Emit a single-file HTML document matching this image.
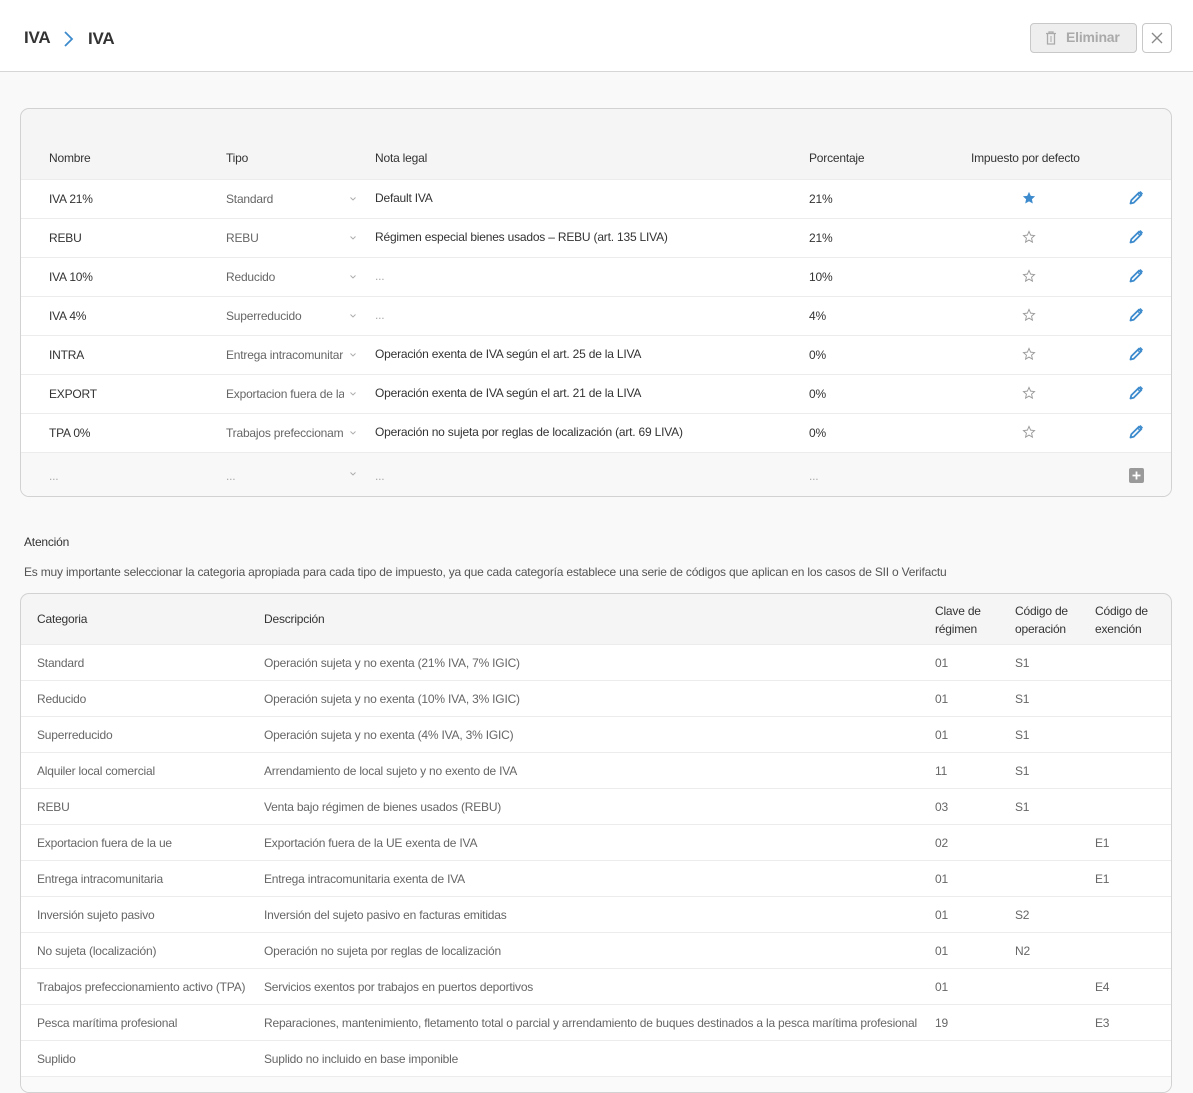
<!DOCTYPE html>
<html><head><meta charset="utf-8">
<style>
*{margin:0;padding:0;box-sizing:border-box}
body{width:1193px;height:1081px;overflow:hidden;background:#f9f9f9;font-family:"Liberation Sans",sans-serif;font-size:12px;color:#333;position:relative;letter-spacing:-0.2px}
.hdr{position:absolute;left:0;top:0;width:1193px;height:72px;background:#fff;border-bottom:1px solid #d6d6d6}
.t{position:absolute;white-space:nowrap;line-height:14px}
.card{position:absolute;left:20px;width:1152px;border:1px solid #d2d2d2;border-radius:9px;overflow:hidden;background:#fff}
.row{position:absolute;left:0;width:1150px;border-top:1px solid #ececec}
.g{color:#666}
.lg{color:#aaa}
.chev svg{display:block}
</style></head><body>
<div class="hdr">
  <div class="t" style="left:24px;top:31px;font-size:17px;font-weight:bold;color:#333">IVA</div>
  <svg style="position:absolute;left:62px;top:30px" width="12" height="18" viewBox="0 0 12 18"><path d="M3 2 L10 9 L3 16" fill="none" stroke="#3d8bcd" stroke-width="1.8"/></svg>
  <div class="t" style="left:88px;top:32px;font-size:17px;font-weight:bold;color:#333">IVA</div>
  <div style="position:absolute;left:1030px;top:23px;width:107px;height:30px;background:#eeeeee;border:1px solid #c8c8c8;border-radius:4px"></div>
  <svg style="position:absolute;left:1045px;top:31px" width="12" height="14" viewBox="0 0 12 14"><path d="M1 2.5H11M4 2.5V1H8V2.5M2.5 2.5V13H9.5V2.5" fill="none" stroke="#aaa" stroke-width="1.3"/><path d="M6 5V11" stroke="#aaa" stroke-width="1"/></svg>
  <div class="t" style="left:1066px;top:30px;font-size:14px;font-weight:bold;color:#aaa">Eliminar</div>
  <div style="position:absolute;left:1142px;top:23px;width:30px;height:30px;border:1px solid #c8c8c8;border-radius:4px;background:#fff"></div>
  <svg style="position:absolute;left:1151px;top:32px" width="12" height="12" viewBox="0 0 12 12"><path d="M1 1L11 11M11 1L1 11" stroke="#888" stroke-width="1.3"/></svg>
</div>

<div class="card" style="top:108px;height:389px;background:#f5f5f5">
  <div class="t" style="left:28px;top:42px">Nombre</div>
  <div class="t" style="left:205px;top:42px">Tipo</div>
  <div class="t" style="left:354px;top:42px">Nota legal</div>
  <div class="t" style="left:788px;top:42px">Porcentaje</div>
  <div class="t" style="left:950px;top:42px">Impuesto por defecto</div>
  <div id="r1"></div>
</div>

<div class="t" style="left:24px;top:535px;color:#333">Atención</div>
<div class="t g" style="left:24px;top:565px;color:#555">Es muy importante seleccionar la categoria apropiada para cada tipo de impuesto, ya que cada categoría establece una serie de códigos que aplican en los casos de SII o Verifactu</div>

<div class="card" style="top:593px;height:500px;background:#f5f5f5">
  <div class="t" style="left:16px;top:18px">Categoria</div>
  <div class="t" style="left:243px;top:18px">Descripción</div>
  <div class="t" style="left:914px;top:8px;line-height:18px">Clave de<br>régimen</div>
  <div class="t" style="left:994px;top:8px;line-height:18px">Código de<br>operación</div>
  <div class="t" style="left:1074px;top:8px;line-height:18px">Código de<br>exención</div>
  <div id="r2"></div>
</div>

<script>
var pencil='<svg width="16" height="16" viewBox="0 0 16 16"><path d="M2.5 13.5L3.3 10.3L11 2.6L13.4 5L5.7 12.7Z" fill="none" stroke="#3d8bcd" stroke-width="1.8" stroke-linejoin="round"/><path d="M11.5 2L12.5 1L15 3.5L14 4.5Z" fill="#3d8bcd"/><path d="M9.6 4L12 6.4" stroke="#3d8bcd" stroke-width="1.3"/></svg>';
function star(f){return f?'<svg width="14" height="14" viewBox="0 0 24 24"><path d="M12 1.5L15.1 8.3L22.5 9.1L17 14.1L18.5 21.5L12 17.8L5.5 21.5L7 14.1L1.5 9.1L8.9 8.3Z" fill="#3d8bcd"/></svg>':'<svg width="14" height="14" viewBox="0 0 24 24"><path d="M12 2.5L14.8 8.8L21.5 9.5L16.4 14L17.9 20.8L12 17.3L6.1 20.8L7.6 14L2.5 9.5L9.2 8.8Z" fill="none" stroke="#999" stroke-width="1.6"/></svg>';}
var chev='<svg width="6" height="4" viewBox="0 0 6 4"><path d="M0.5 0.5L3 3L5.5 0.5" fill="none" stroke="#aaa" stroke-width="0.9"/></svg>';
var d1=[["IVA 21%","Standard","Default IVA","21%",1],["REBU","REBU","Régimen especial bienes usados – REBU (art. 135 LIVA)","21%",0],["IVA 10%","Reducido","...","10%",0],["IVA 4%","Superreducido","...","4%",0],["INTRA","Entrega intracomunitar","Operación exenta de IVA según el art. 25 de la LIVA","0%",0],["EXPORT","Exportacion fuera de la","Operación exenta de IVA según el art. 21 de la LIVA","0%",0],["TPA 0%","Trabajos prefeccionami","Operación no sujeta por reglas de localización (art. 69 LIVA)","0%",0]];
var h='';
d1.forEach(function(r,i){var top=70+i*39;
h+='<div class="row" style="top:'+top+'px;height:39px;background:#fff">'+
'<div class="t" style="left:28px;top:12px">'+r[0]+'</div>'+
'<div class="t g" style="left:205px;top:12px;width:118px;overflow:hidden">'+r[1]+'</div>'+
'<div class="chev" style="position:absolute;left:329px;top:17px">'+chev+'</div>'+
'<div class="t '+(r[2]=="..."?"lg":"")+'" style="left:354px;top:11px">'+r[2]+'</div>'+
'<div class="t" style="left:788px;top:12px">'+r[3]+'</div>'+
'<div style="position:absolute;left:1001px;top:11px">'+star(r[4])+'</div>'+
'<div style="position:absolute;left:1107px;top:10px">'+pencil+'</div></div>';});
h+='<div class="row" style="top:343px;height:46px;background:#f8f8f8">'+
'<div class="t lg" style="left:28px;top:16px">...</div><div class="t lg" style="left:205px;top:16px">...</div>'+
'<div class="chev" style="position:absolute;left:329px;top:19px">'+chev+'</div><div class="t lg" style="left:354px;top:16px">...</div><div class="t lg" style="left:788px;top:16px">...</div>'+
'<div style="position:absolute;left:1108px;top:15px;width:15px;height:15px;background:#9a9a9a;border-radius:2px"><svg width="15" height="15" viewBox="0 0 15 15"><path d="M7.5 3.5V11.5M3.5 7.5H11.5" stroke="#fff" stroke-width="1.8"/></svg></div></div>';
document.getElementById('r1').outerHTML=h;
var d2=[["Standard","Operación sujeta y no exenta (21% IVA, 7% IGIC)","01","S1",""],["Reducido","Operación sujeta y no exenta (10% IVA, 3% IGIC)","01","S1",""],["Superreducido","Operación sujeta y no exenta (4% IVA, 3% IGIC)","01","S1",""],["Alquiler local comercial","Arrendamiento de local sujeto y no exento de IVA","11","S1",""],["REBU","Venta bajo régimen de bienes usados (REBU)","03","S1",""],["Exportacion fuera de la ue","Exportación fuera de la UE exenta de IVA","02","","E1"],["Entrega intracomunitaria","Entrega intracomunitaria exenta de IVA","01","","E1"],["Inversión sujeto pasivo","Inversión del sujeto pasivo en facturas emitidas","01","S2",""],["No sujeta (localización)","Operación no sujeta por reglas de localización","01","N2",""],["Trabajos prefeccionamiento activo (TPA)","Servicios exentos por trabajos en puertos deportivos","01","","E4"],["Pesca marítima profesional","Reparaciones, mantenimiento, fletamento total o parcial y arrendamiento de buques destinados a la pesca marítima profesional","19","","E3"],["Suplido","Suplido no incluido en base imponible","","",""]];
h='';
d2.forEach(function(r,i){var top=50+i*36;
h+='<div class="row" style="top:'+top+'px;height:36px;background:#fff">'+
'<div class="t g" style="left:16px;top:11px">'+r[0]+'</div>'+
'<div class="t g" style="left:243px;top:11px;width:665px;overflow:hidden">'+r[1]+'</div>'+
'<div class="t g" style="left:914px;top:11px">'+r[2]+'</div>'+
'<div class="t g" style="left:994px;top:11px">'+r[3]+'</div>'+
'<div class="t g" style="left:1074px;top:11px">'+r[4]+'</div></div>';});
h+='<div class="row" style="top:482px;height:30px;background:#fafafa"></div>';
document.getElementById('r2').outerHTML=h;
</script>
</body></html>
